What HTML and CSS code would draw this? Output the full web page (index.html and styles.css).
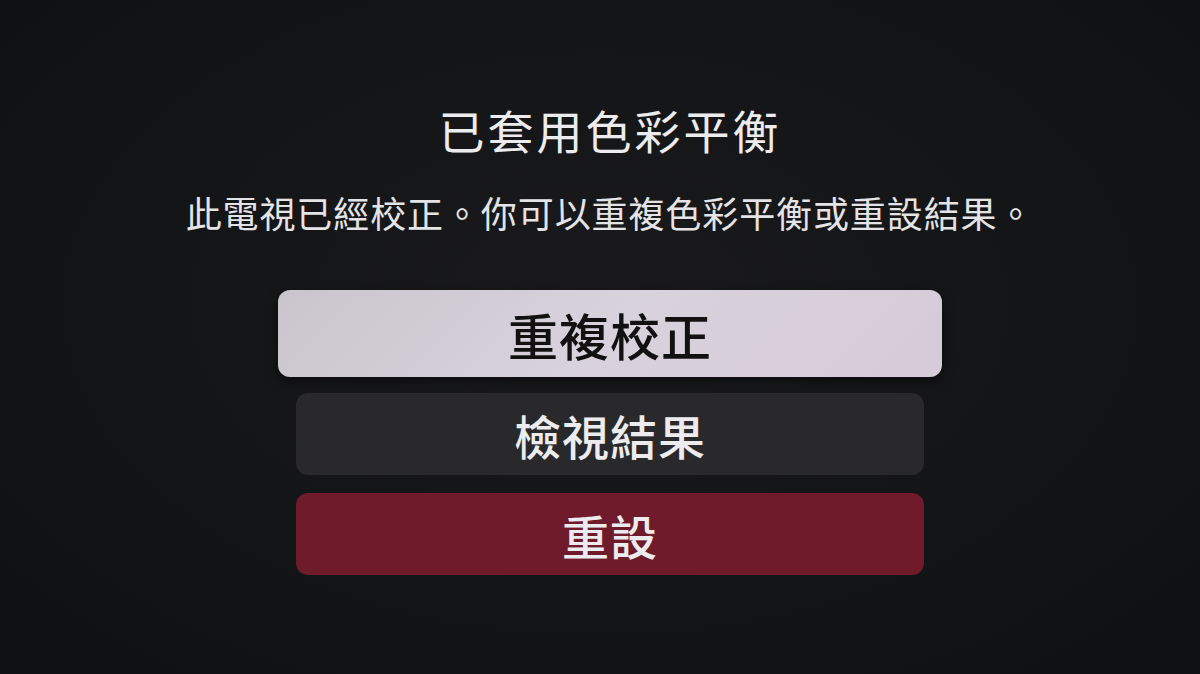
FILE: index.html
```html
<!DOCTYPE html>
<html lang="zh-Hant">
<head>
  <meta charset="UTF-8">
  <meta name="viewport" content="width=device-width, initial-scale=1.0">
  <title>色彩平衡</title>
  <link rel="stylesheet" href="styles.css">
</head>
<body>
  <main class="screen">
    <h1 class="title">已套用色彩平衡</h1>
    <p class="subtitle">此電視已經校正。你可以重複色彩平衡或重設結果。</p>

    <div class="menu">
      <button class="btn btn-focus">重複校正</button>
      <button class="btn btn-dark">檢視結果</button>
      <button class="btn btn-red">重設</button>
    </div>
  </main>
</body>
</html>
```

FILE: styles.css
```css
html, body { margin: 0; padding: 0; height: 100%; }
body {
  background: radial-gradient(ellipse at 50% 45%, #1a1a1c 0%, #131415 60%, #0f1011 100%);
  font-family: "Noto Sans CJK TC", "Noto Sans", sans-serif;
  color: #e6e6e8;
  overflow: hidden;
}
.screen { display: flex; flex-direction: column; align-items: center; padding: 100px 0 0 20px; }
.title { margin: 0; font-size: 46px; font-weight: 400; letter-spacing: 3px; line-height: 58px; color: #ececee; }
.subtitle { margin: 32px 0 0; font-size: 36px; font-weight: 400; letter-spacing: 0.9px; line-height: 44px; color: #e4e4e6; }
.menu { display: flex; flex-direction: column; align-items: center; gap: 16px; margin-top: 56px; }
.btn {
  border: none; border-radius: 12px; width: 628px; height: 82px;
  font-family: inherit; font-size: 47px; font-weight: 500; letter-spacing: 1px;
  color: #ececee; padding: 0; cursor: pointer;
}
.btn-focus {
  width: 664px; height: 87px; color: #111; font-size: 50px;
  background: linear-gradient(135deg, #c8c6cc 0%, #d8d2dc 50%, #d6cbd9 100%);
  box-shadow: 0 4px 12px rgba(0,0,0,0.5);
}
.btn-dark { background: #29292b; }
.btn-red { background: #701b2c; margin-top: 2px; }
```
